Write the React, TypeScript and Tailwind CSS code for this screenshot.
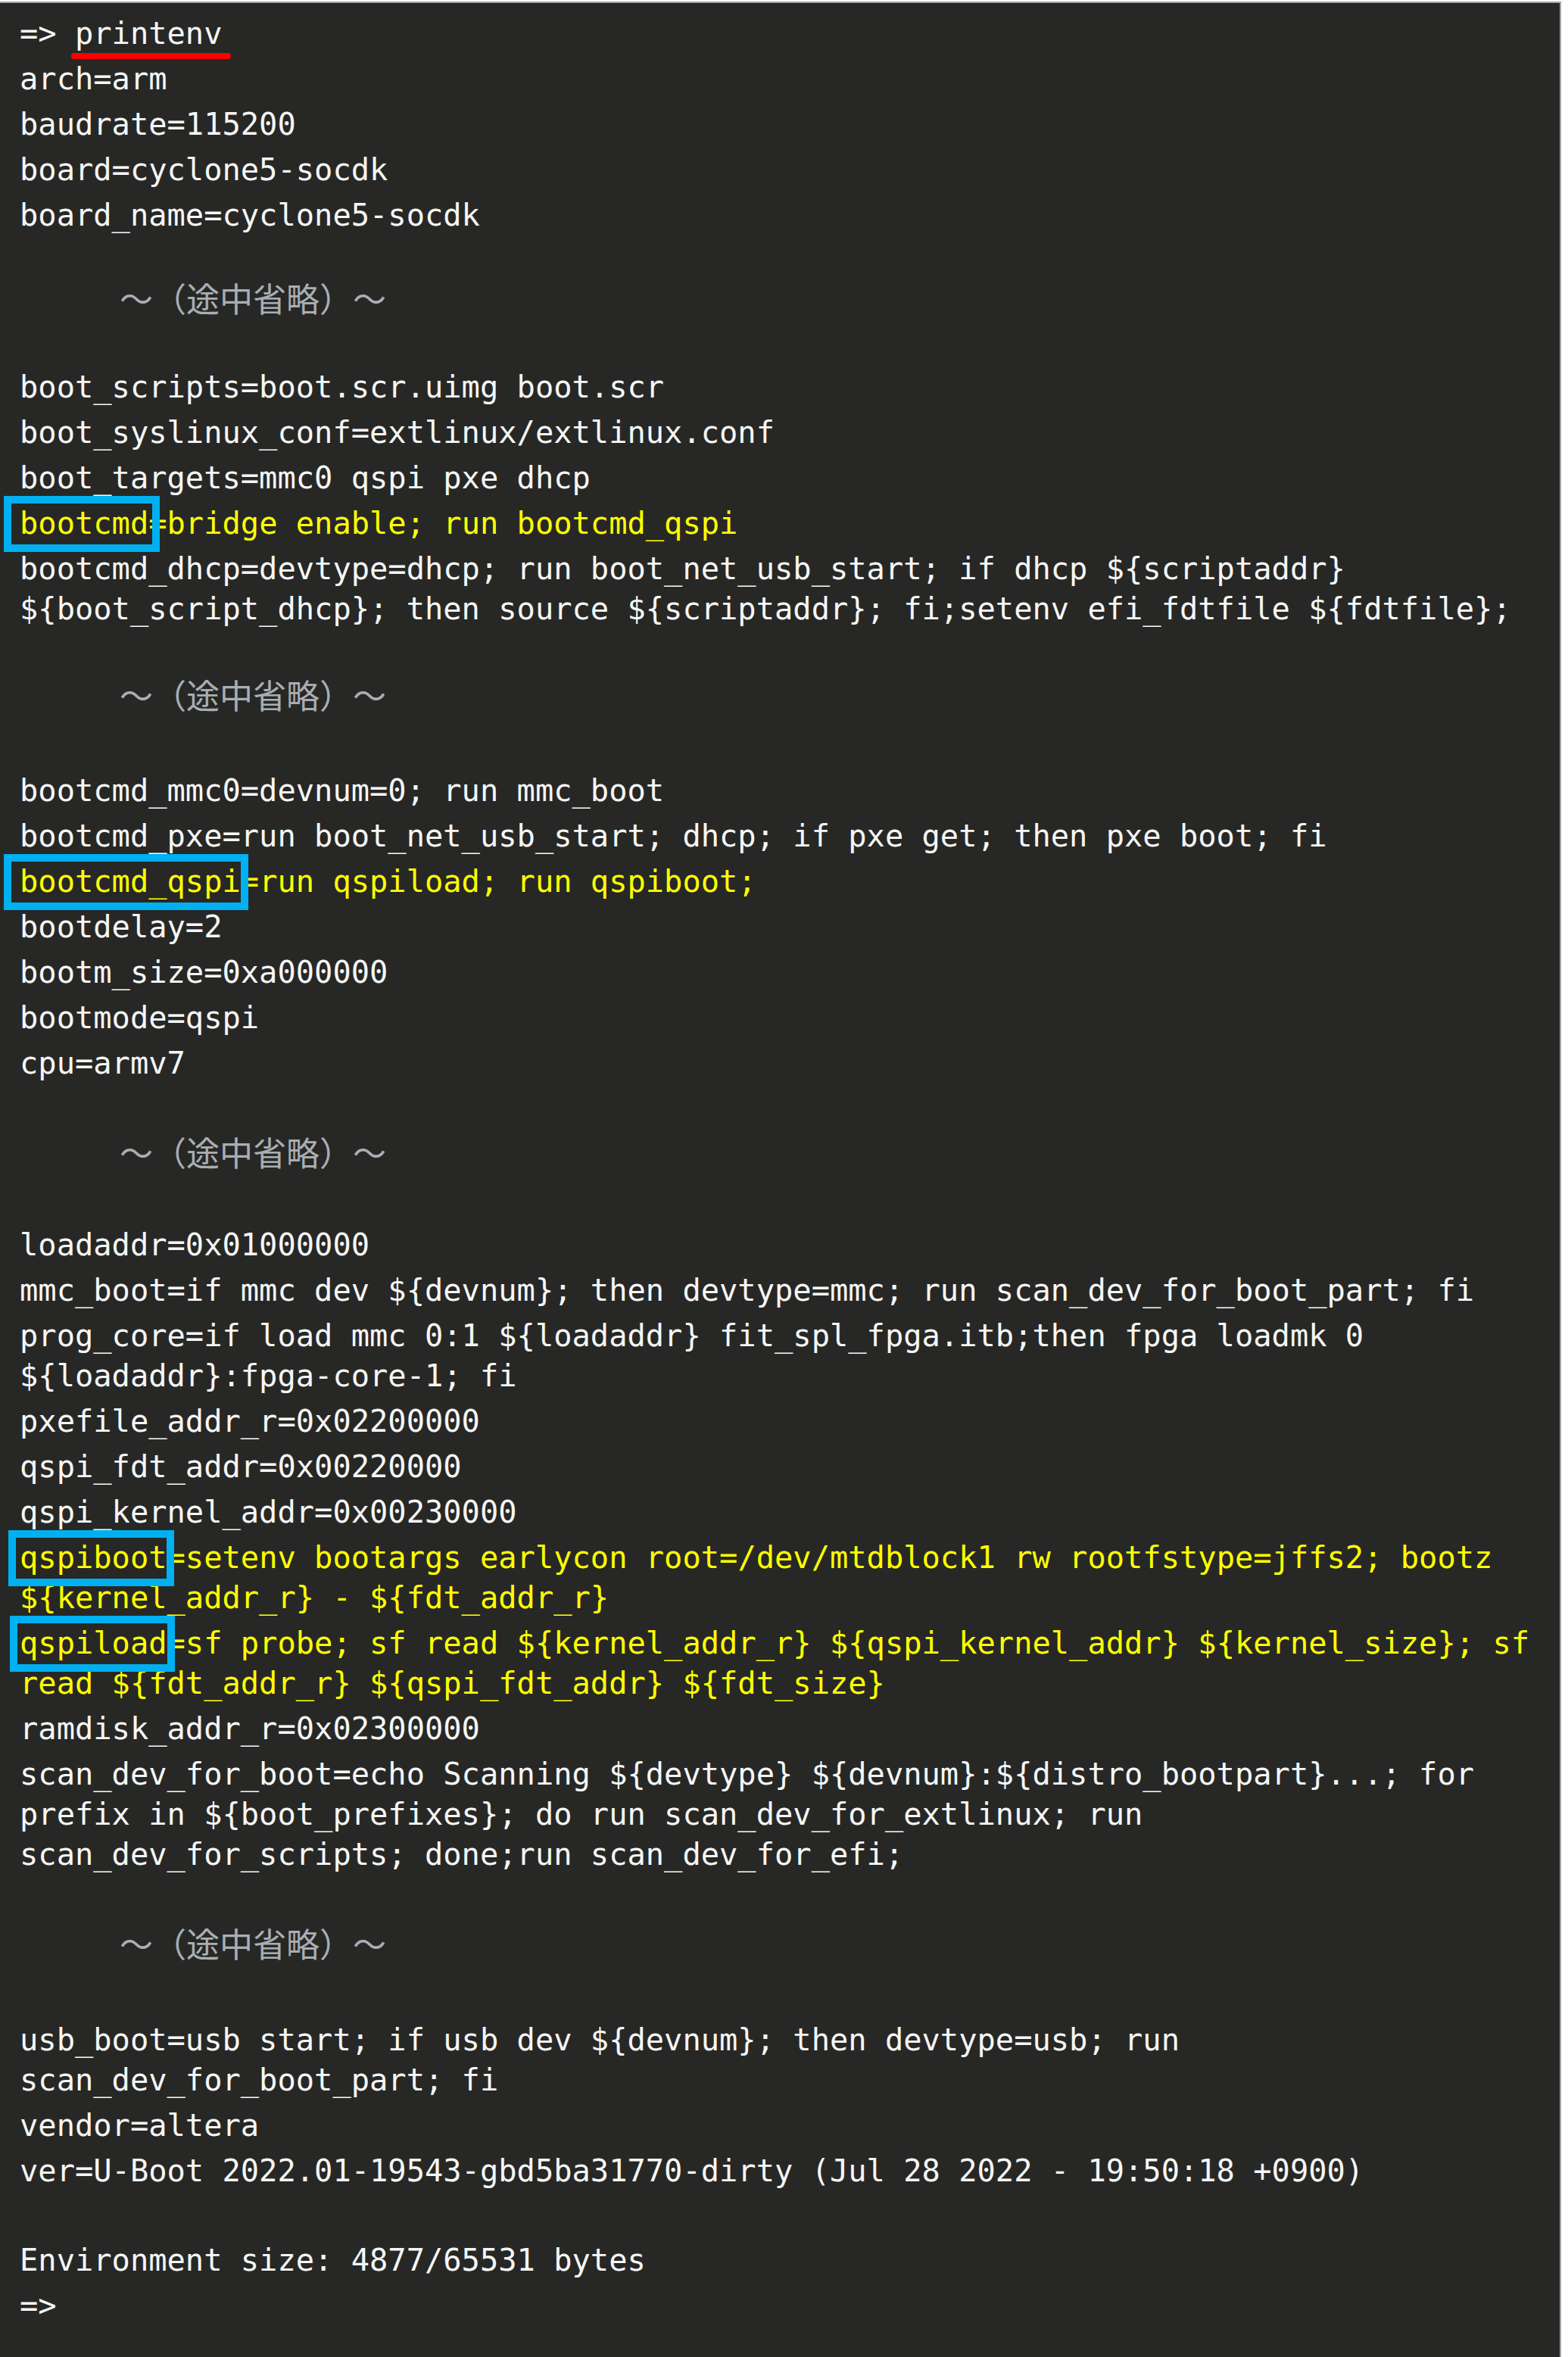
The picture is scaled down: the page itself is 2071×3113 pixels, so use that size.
import React from "react";

type Para = {
  kind: "p";
  lines: React.ReactNode[];
  yellow?: boolean;
};
type Om = { kind: "om"; cls: string };
type Blank = { kind: "blank"; cls: string };
type Item = Para | Om | Blank;

function Key({ text, cls }: { text: string; cls: string }) {
  return (
    <span className="relative inline-block">
      {text}
      <span className={`absolute top-[-10px] bottom-[-11px] border-[10px] border-[#00b0f0] ${cls}`} />
    </span>
  );
}

const items: Item[] = [
  {
    kind: "p",
    lines: [
      <>
        {"=> "}
        <span className="relative inline-block">
          printenv
          <span className="absolute left-[-5px] right-[-11px] top-[52.5px] h-[8px] rounded-full bg-[#ff0000]" />
        </span>
      </>,
    ],
  },
  { kind: "p", lines: ["arch=arm"] },
  { kind: "p", lines: ["baudrate=115200"] },
  { kind: "p", lines: ["board=cyclone5-socdk"] },
  { kind: "p", lines: ["board_name=cyclone5-socdk"] },
  { kind: "om", cls: "h-[160px] pt-[49px]" },
  { kind: "p", lines: ["boot_scripts=boot.scr.uimg boot.scr"] },
  { kind: "p", lines: ["boot_syslinux_conf=extlinux/extlinux.conf"] },
  { kind: "p", lines: ["boot_targets=mmc0 qspi pxe dhcp"] },
  {
    kind: "p",
    yellow: true,
    lines: [
      <>
        <Key text="bootcmd" cls="left-[-21px] right-[-15px]" />
        {"=bridge enable; run bootcmd_qspi"}
      </>,
    ],
  },
  {
    kind: "p",
    lines: [
      "bootcmd_dhcp=devtype=dhcp; run boot_net_usb_start; if dhcp ${scriptaddr}",
      "${boot_script_dhcp}; then source ${scriptaddr}; fi;setenv efi_fdtfile ${fdtfile};",
    ],
  },
  { kind: "om", cls: "h-[173px] pt-[53px]" },
  { kind: "p", lines: ["bootcmd_mmc0=devnum=0; run mmc_boot"] },
  { kind: "p", lines: ["bootcmd_pxe=run boot_net_usb_start; dhcp; if pxe get; then pxe boot; fi"] },
  {
    kind: "p",
    yellow: true,
    lines: [
      <>
        <Key text="bootcmd_qspi" cls="left-[-21px] right-[-10px]" />
        {"=run qspiload; run qspiboot;"}
      </>,
    ],
  },
  { kind: "p", lines: ["bootdelay=2"] },
  { kind: "p", lines: ["bootm_size=0xa000000"] },
  { kind: "p", lines: ["bootmode=qspi"] },
  { kind: "p", lines: ["cpu=armv7"] },
  { kind: "om", cls: "h-[173.5px] pt-[57px]" },
  { kind: "p", lines: ["loadaddr=0x01000000"] },
  { kind: "p", lines: ["mmc_boot=if mmc dev ${devnum}; then devtype=mmc; run scan_dev_for_boot_part; fi"] },
  {
    kind: "p",
    lines: [
      "prog_core=if load mmc 0:1 ${loadaddr} fit_spl_fpga.itb;then fpga loadmk 0",
      "${loadaddr}:fpga-core-1; fi",
    ],
  },
  { kind: "p", lines: ["pxefile_addr_r=0x02200000"] },
  { kind: "p", lines: ["qspi_fdt_addr=0x00220000"] },
  { kind: "p", lines: ["qspi_kernel_addr=0x00230000"] },
  {
    kind: "p",
    yellow: true,
    lines: [
      <>
        <Key text="qspiboot" cls="left-[-15px] right-[-9px]" />
        {"=setenv bootargs earlycon root=/dev/mtdblock1 rw rootfstype=jffs2; bootz"}
      </>,
      "${kernel_addr_r} - ${fdt_addr_r}",
    ],
  },
  {
    kind: "p",
    yellow: true,
    lines: [
      <>
        <Key text="qspiload" cls="left-[-13px] right-[-10px]" />
        {"=sf probe; sf read ${kernel_addr_r} ${qspi_kernel_addr} ${kernel_size}; sf"}
      </>,
      "read ${fdt_addr_r} ${qspi_fdt_addr} ${fdt_size}",
    ],
  },
  { kind: "p", lines: ["ramdisk_addr_r=0x02300000"] },
  {
    kind: "p",
    lines: [
      "scan_dev_for_boot=echo Scanning ${devtype} ${devnum}:${distro_bootpart}...; for",
      "prefix in ${boot_prefixes}; do run scan_dev_for_extlinux; run",
      "scan_dev_for_scripts; done;run scan_dev_for_efi;",
    ],
  },
  { kind: "om", cls: "h-[177.5px] pt-[56.5px]" },
  {
    kind: "p",
    lines: ["usb_boot=usb start; if usb dev ${devnum}; then devtype=usb; run", "scan_dev_for_boot_part; fi"],
  },
  { kind: "p", lines: ["vendor=altera"] },
  { kind: "p", lines: ["ver=U-Boot 2022.01-19543-gbd5ba31770-dirty (Jul 28 2022 - 19:50:18 +0900)"] },
  { kind: "blank", cls: "h-[51px]" },
  { kind: "p", lines: ["Environment size: 4877/65531 bytes"] },
  { kind: "p", lines: ["=>"] },
];

export default function App() {
  return (
    <div className="min-h-screen w-full bg-white pt-[2px]">
      <div className="h-[3111px] w-[2062px] border-t-2 border-r-2 border-[#a3a3a3] bg-[#272825] pl-[26px] pt-[13.5px]">
        <div className="flex flex-col gap-[7px] font-['DejaVu_Sans_Mono',monospace] text-[40.4px] leading-[53px] text-[#f6f6f6]">
          {items.map((it, i) => {
            if (it.kind === "om") {
              return (
                <div key={i} className={`${it.cls} pl-[132px]`}>
                  <div className="font-['Noto_Sans_CJK_JP',sans-serif] text-[44px] leading-[53px] text-[#a9aeb4] [text-spacing-trim:space-all] whitespace-pre">
                    〜（途中省略）〜
                  </div>
                </div>
              );
            }
            if (it.kind === "blank") {
              return <div key={i} className={it.cls} />;
            }
            return (
              <div key={i} className={it.yellow ? "text-[#ffff00]" : ""}>
                {it.lines.map((ln, j) => (
                  <div key={j} className="h-[53px] whitespace-pre">
                    {ln}
                  </div>
                ))}
              </div>
            );
          })}
        </div>
      </div>
    </div>
  );
}
